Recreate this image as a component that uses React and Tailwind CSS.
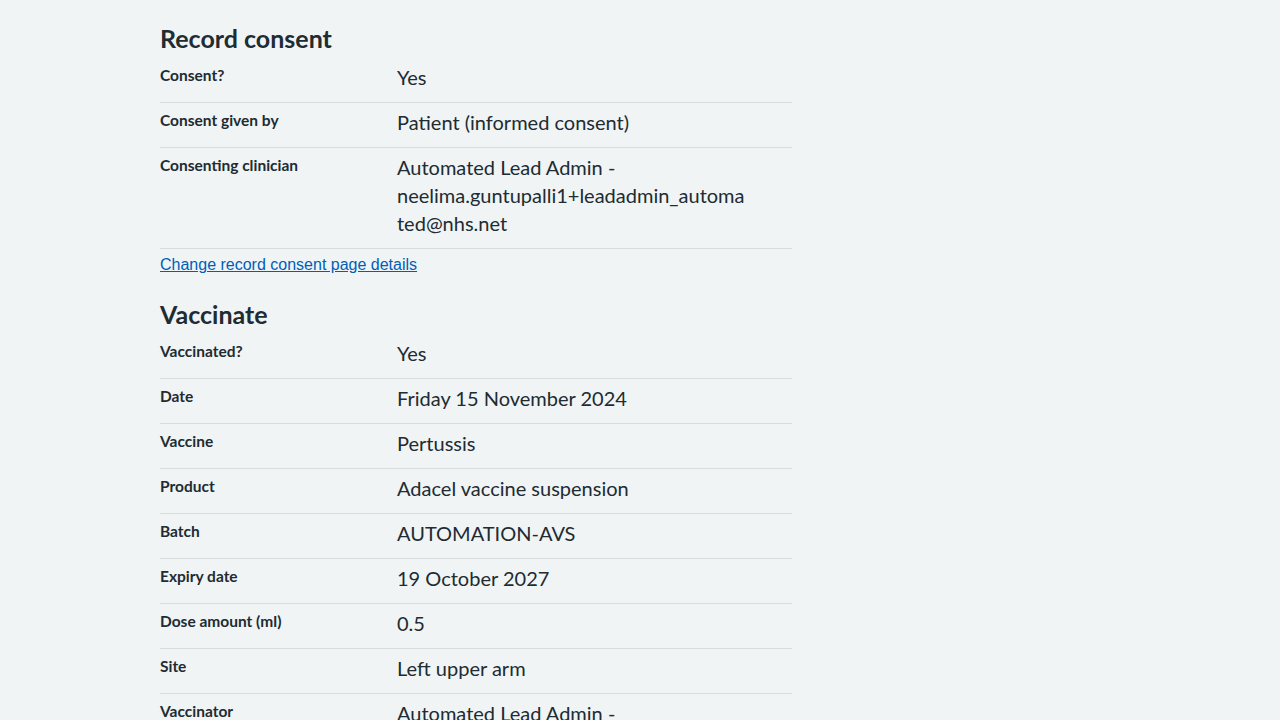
import React from "react";

const font = { fontFamily: '"Lato", "Noto Sans", sans-serif' };

function Row({ k, v }) {
  return (
    <div className="flex border-b border-[#d8dde0]">
      <div className="w-[237px] shrink-0 pt-[6px] pb-[10px] text-[15.5px] leading-[22px] font-bold text-[#212b32]">{k}</div>
      <div className="flex-1 pt-[5px] pb-[11px] text-[20px] leading-[28px] text-[#212b32] whitespace-nowrap">{v}</div>
    </div>
  );
}

const clinician = (
  <>
    Automated Lead Admin -<br />
    neelima.guntupalli1+leadadmin_automa<br />
    ted@nhs.net
  </>
);

export default function App() {
  return (
    <div className="min-h-screen bg-[#f0f4f5]" style={font}>
      <div className="ml-[160px] w-[632px]">
        <h2 className="pt-[22px] text-[25px] leading-[32px] font-bold text-[#212b32] mb-[4px]">Record consent</h2>
        <Row k="Consent?" v="Yes" />
        <Row k="Consent given by" v="Patient (informed consent)" />
        <Row k="Consenting clinician" v={clinician} />
        <div className="pt-[3px]">
          <a href="#" className="text-[16px] leading-[18px] text-[#005eb8] underline" style={{ fontFamily: '"Liberation Sans", Arial, sans-serif' }}>
            Change record consent page details
          </a>
        </div>
        <h2 className="mt-[22px] text-[25px] leading-[32px] font-bold text-[#212b32] mb-[4px]">Vaccinate</h2>
        <Row k="Vaccinated?" v="Yes" />
        <Row k="Date" v="Friday 15 November 2024" />
        <Row k="Vaccine" v="Pertussis" />
        <Row k="Product" v="Adacel vaccine suspension" />
        <Row k="Batch" v="AUTOMATION-AVS" />
        <Row k="Expiry date" v="19 October 2027" />
        <Row k="Dose amount (ml)" v="0.5" />
        <Row k="Site" v="Left upper arm" />
        <Row k="Vaccinator" v={clinician} />
      </div>
    </div>
  );
}
